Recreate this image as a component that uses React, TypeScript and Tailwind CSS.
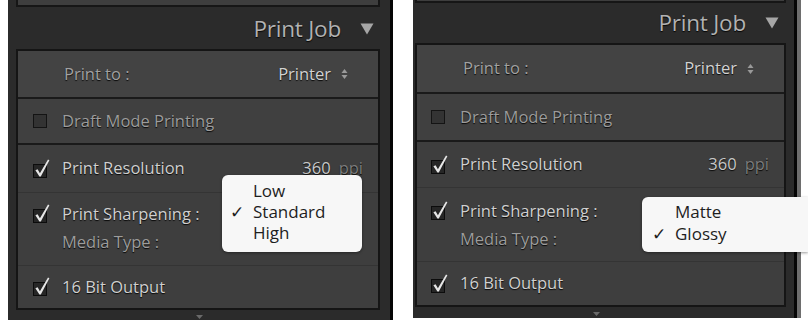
import React from "react"

function Check() {
  return (
    <svg width="19" height="20" viewBox="0 0 19 20" className="shrink-0">
      <rect x="1.5" y="5.5" width="13" height="13" fill="#262626" stroke="#0c0c0c" />
      <path d="M3.4 11.2 L5.6 10.2 L7.9 14.2 L16 0.6 L17.4 1.3 L8.8 17.6 L7.4 17.6 Z" fill="#e6e6e6" />
    </svg>
  )
}

function Unchecked() {
  return (
    <svg width="19" height="20" viewBox="0 0 19 20" className="shrink-0">
      <rect x="1.5" y="3.5" width="13" height="13" fill="#333333" stroke="#141414" />
    </svg>
  )
}

function UpDown() {
  return (
    <svg width="7" height="12" viewBox="0 0 7 12" className="ml-[10px]">
      <path d="M0.5 5 L3.5 1 L6.5 5 Z" fill="#9a9a9a" />
      <path d="M0.5 7 L3.5 11 L6.5 7 Z" fill="#9a9a9a" />
    </svg>
  )
}

const shadow = "[text-shadow:0_1px_1px_rgba(0,0,0,0.9)]"

type PanelProps = {
  side: "left" | "right"
}

function Panel({ side }: PanelProps) {
  const left = side === "left"
  return (
    <div
      className={
        left
          ? "relative ml-[8px] w-[385px] h-[320px] bg-[#2b2b2b] border-r-[3px] border-[#050505] flex flex-col pl-[8px] pr-[10px]"
          : "relative ml-[20px] w-[384px] h-[318px] bg-[#2b2b2b] border-r-[3px] border-[#050505] flex flex-col pl-[2px] pr-[8px] shadow-[4px_0_0_#6e6e6e]"
      }
    >
      <div
        className={
          left
            ? "h-[7px] bg-[#3e3e3e] border-x-2 border-b-2 border-[#161616]"
            : "h-[3px] bg-[#3e3e3e] border-x-2 border-b-2 border-[#161616]"
        }
      />
      <div
        className={
          left
            ? "h-[42px] flex items-center justify-end pr-[6px] pt-[2px]"
            : "h-[40px] flex items-center justify-end pr-[7px]"
        }
      >
        <span className={`text-[22.5px] text-[#b2b2b2] tracking-[-0.2px] ${shadow}`}>Print Job</span>
        <svg width="14" height="12" viewBox="0 0 14 12" className="ml-[19px]">
          <path d="M0.5 0.5 L13.5 0.5 L7 11.5 Z" fill="#a6a6a6" />
        </svg>
      </div>

      <div className="border-2 border-[#151515] bg-[#3e3e3e] flex flex-col text-[16.5px]">
        <div
          className={
            left
              ? "h-[46px] bg-[#434343] flex items-center justify-between pl-[46px] pr-[30px]"
              : "h-[47px] bg-[#434343] flex items-center justify-between pl-[46px] pr-[30px]"
          }
        >
          <span className={`text-[#a2a2a2] ${shadow}`}>Print to :</span>
          <span className="flex items-center">
            <span className={`text-[#d2d2d2] ${shadow}`}>Printer</span>
            <UpDown />
          </span>
        </div>

        <div
          className={
            left
              ? "h-[46px] border-t-2 border-[#1a1a1a] bg-[#404040] flex items-center pl-[14px]"
              : "h-[48px] border-t-2 border-[#1a1a1a] bg-[#404040] flex items-center pl-[13px]"
          }
        >
          <Unchecked />
          <span className={`ml-[11px] text-[#9c9c9c] ${shadow}`}>Draft Mode Printing</span>
        </div>

        <div
          className={
            left
              ? "h-[49px] border-t-2 border-[#1a1a1a] flex items-center pl-[14px] pr-[15px]"
              : "h-[47px] border-t-2 border-[#1a1a1a] flex items-center pl-[13px] pr-[15px]"
          }
        >
          <Check />
          <span className={`ml-[11px] text-[#d0d0d0] ${shadow}`}>Print Resolution</span>
          <span className={`ml-auto text-[#c8c8c8] ${shadow}`}>360</span>
          <span className={`ml-[8px] text-[#7c7c7c] ${shadow}`}>ppi</span>
        </div>

        <div
          className={
            left
              ? "h-[73px] border-t border-[#343434] flex flex-col pl-[14px] pt-[8px]"
              : "h-[74px] border-t border-[#343434] flex flex-col pl-[13px] pt-[10px]"
          }
        >
          <div className="h-[26px] flex items-center">
            <Check />
            <span className={`ml-[11px] text-[#d0d0d0] ${shadow}`}>Print Sharpening :</span>
          </div>
          <div className="h-[28px] flex items-center pl-[30px] pt-[2px]">
            <span className={`text-[#9c9c9c] ${shadow}`}>Media Type :</span>
          </div>
        </div>

        <div
          className={
            left
              ? "h-[43px] border-t border-[#343434] flex items-center pl-[14px]"
              : "h-[44px] border-t border-[#343434] flex items-center pl-[13px]"
          }
        >
          <Check />
          <span className={`ml-[11px] text-[#d0d0d0] ${shadow}`}>16 Bit Output</span>
        </div>
      </div>

      <div className={left ? "flex-1 flex items-end justify-center pb-[1px] pl-[2px]" : "flex-1 flex items-end justify-center pb-[2px] pr-[8px]"}>
        <svg width="7" height="4" viewBox="0 0 7 4">
          <path d="M0 0 L7 0 L3.5 4 Z" fill="#6a6a6a" />
        </svg>
      </div>
    </div>
  )
}

export default function App() {
  return (
    <div className="relative w-[808px] h-[324px] bg-white overflow-hidden flex font-['Open_Sans',sans-serif]">
      <Panel side="left" />
      <Panel side="right" />

      <div className="absolute left-[222px] top-[175px] w-[140px] h-[77px] bg-[#f7f7f7] rounded-[6px] shadow-[0_1px_3px_rgba(0,0,0,0.4)] pt-[5px] text-[17px] text-[#1e1e1e] leading-[21px]">
        <div className="pl-[31px]">Low</div>
        <div className="flex">
          <span className="w-[31px] pl-[8px]">✓</span>
          <span>Standard</span>
        </div>
        <div className="pl-[31px]">High</div>
      </div>

      <div className="absolute left-[642px] top-[197px] w-[166px] h-[55px] bg-[#f7f7f7] rounded-l-[6px] shadow-[0_1px_3px_rgba(0,0,0,0.4)] pt-[4px] text-[17px] text-[#1e1e1e] leading-[22px]">
        <div className="pl-[33px]">Matte</div>
        <div className="flex">
          <span className="w-[33px] pl-[10px]">✓</span>
          <span>Glossy</span>
        </div>
      </div>
    </div>
  )
}
